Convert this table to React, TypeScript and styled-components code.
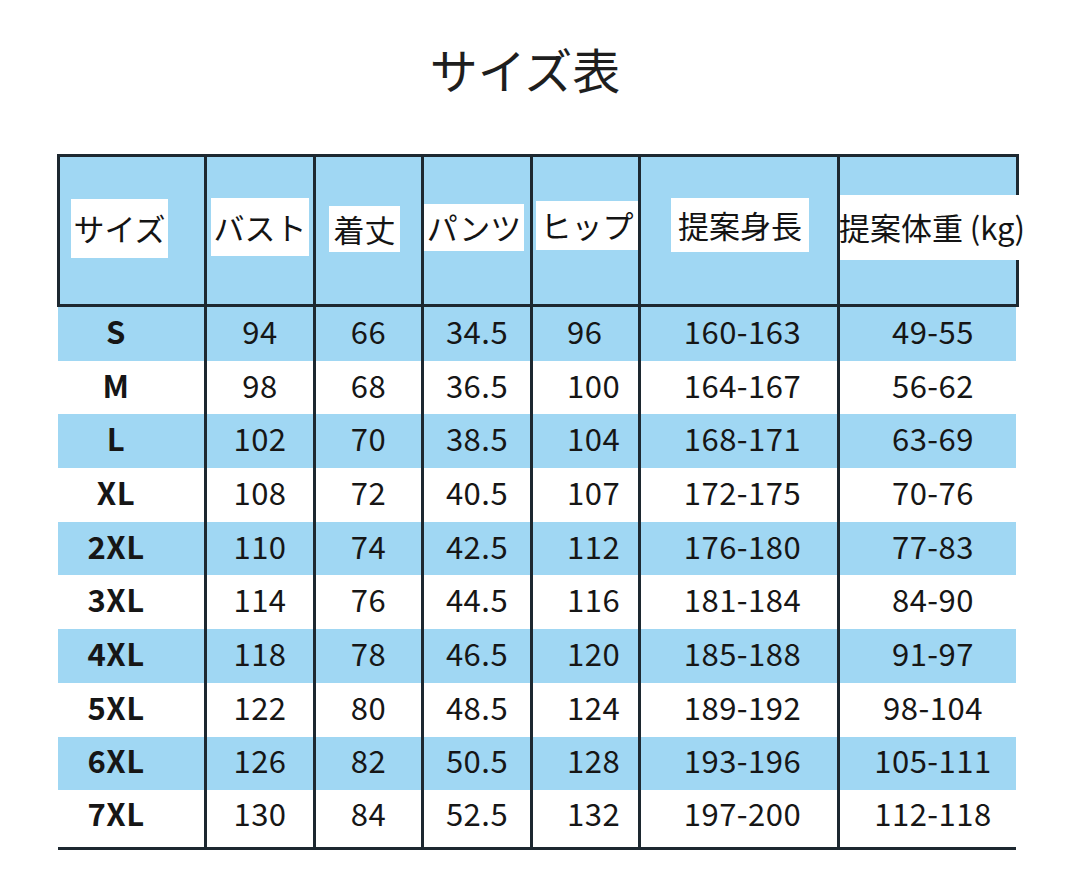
import React from 'react';
import styled, {createGlobalStyle} from 'styled-components';

const GlobalStyle = createGlobalStyle`
  html, body {
    margin: 0;
    padding: 0;
    background: #fff;
  }
  body {
    font-family: "Noto Sans CJK JP", "Noto Sans", sans-serif;
    color: #161616;
  }
`

const BLUE = '#a0d7f3'
const LINE = '#1d2830'

type HeadCell = {label: string, x: number, y: number, w: number, h: number}

// white label boxes inside the header, offsets from the cell's content box
const headers: HeadCell[] = [
  {label: 'サイズ', x: 11, y: 42, w: 97, h: 59},
  {label: 'バスト', x: 4, y: 41, w: 98, h: 58},
  {label: '着丈', x: 13, y: 49, w: 71, h: 46},
  {label: 'パンツ', x: 0, y: 47, w: 100, h: 47},
  {label: 'ヒップ', x: 3, y: 44, w: 102, h: 49},
  {label: '提案身長', x: 30, y: 41, w: 138, h: 54},
  {label: '提案体重 (kg)', x: 0, y: 38, w: 184, h: 65},
]

type Align = 'center' | 'flex-start'
const columns: {align: Align, padL: number, padR: number}[] = [
  {align: 'center', padL: 0, padR: 30},
  {align: 'center', padL: 0, padR: 0},
  {align: 'center', padL: 0, padR: 0},
  {align: 'center', padL: 0, padR: 0},
  {align: 'flex-start', padL: 34, padR: 0},
  {align: 'center', padL: 7, padR: 0},
  {align: 'center', padL: 10, padR: 0},
]

const rows: string[][] = [
  ['S', '94', '66', '34.5', '96', '160-163', '49-55'],
  ['M', '98', '68', '36.5', '100', '164-167', '56-62'],
  ['L', '102', '70', '38.5', '104', '168-171', '63-69'],
  ['XL', '108', '72', '40.5', '107', '172-175', '70-76'],
  ['2XL', '110', '74', '42.5', '112', '176-180', '77-83'],
  ['3XL', '114', '76', '44.5', '116', '181-184', '84-90'],
  ['4XL', '118', '78', '46.5', '120', '185-188', '91-97'],
  ['5XL', '122', '80', '48.5', '124', '189-192', '98-104'],
  ['6XL', '126', '82', '50.5', '128', '193-196', '105-111'],
  ['7XL', '130', '84', '52.5', '132', '197-200', '112-118'],
]

export default function App() {
  return (
    <Page>
      <GlobalStyle/>
      <Title>サイズ表</Title>
      <Table>
        <HeaderRow>
          {headers.map((h, i) =>
            <HeaderCell key={h.label} $first={i === 0}>
              <Label $x={h.x} $y={h.y} $w={h.w} $h={h.h}>{h.label}</Label>
            </HeaderCell>
          )}
        </HeaderRow>
        <Body>
          {rows.map((row, r) =>
            <Row key={row[0]} $alt={r % 2 === 0}>
              {row.map((value, c) =>
                <Cell
                  key={c}
                  $first={c === 0}
                  $align={columns[c].align}
                  $padL={columns[c].padL}
                  $padR={columns[c].padR}
                >
                  {c === 0 ? <SizeName>{value}</SizeName> : value}
                </Cell>
              )}
            </Row>
          )}
        </Body>
      </Table>
    </Page>
  );
}

const Page = styled.div`
  width: 1080px;
  height: 886px;
  overflow: hidden;
  background: #fff;
`
const Title = styled.h1`
  margin: 39px 0 0 0;
  height: 58px;
  padding-right: 30px;
  text-align: center;
  font-size: 48px;
  line-height: 58px;
  font-weight: 400;
  color: #1e1e1e;
`
const Table = styled.div`
  margin: 57px 0 0 57px;
  width: 962px;
`
const gridCols = (first: number) =>
  `${first}px 109px 108px 109px 108px 199px 179px`

const HeaderRow = styled.div`
  display: grid;
  grid-template-columns: ${gridCols(144)};
  height: 153px;
  box-sizing: border-box;
  border: 3px solid ${LINE};
  background: ${BLUE};
`
const HeaderCell = styled.div<{$first: boolean}>`
  display: flex;
  align-items: flex-start;
  border-left: ${({$first}) => $first ? 'none' : `3px solid ${LINE}`};
  min-width: 0;
`
const Label = styled.div<{$x: number, $y: number, $w: number, $h: number}>`
  flex: none;
  margin: ${({$y, $x}) => `${$y}px 0 0 ${$x}px`};
  width: ${({$w}) => $w}px;
  height: ${({$h}) => $h}px;
  display: flex;
  align-items: center;
  justify-content: center;
  background: #fff;
  font-size: 31px;
  color: #141414;
  white-space: nowrap;
  padding-bottom: 2px;
  box-sizing: border-box;
`
const Body = styled.div`
  margin-left: 1px;
  width: 958px;
  border-bottom: 3px solid ${LINE};
`
const Row = styled.div<{$alt: boolean}>`
  display: grid;
  grid-template-columns: ${gridCols(146)};
  height: 53.7px;
  background: ${({$alt}) => $alt ? BLUE : '#fff'};
  &:last-child {
    height: 56.7px;
  }
`
const Cell = styled.div<{$first: boolean, $align: Align, $padL: number, $padR: number}>`
  display: flex;
  align-items: center;
  justify-content: ${({$align}) => $align};
  padding: 0 ${({$padR}) => $padR}px 7px ${({$padL}) => $padL}px;
  border-left: ${({$first}) => $first ? 'none' : `3px solid ${LINE}`};
  font-size: 31px;
  letter-spacing: 0.5px;
  color: #161616;
  white-space: nowrap;
  ${Row}:last-child & {
    padding-bottom: 13px;
  }
`
const SizeName = styled.span`
  font-weight: 700;
`
